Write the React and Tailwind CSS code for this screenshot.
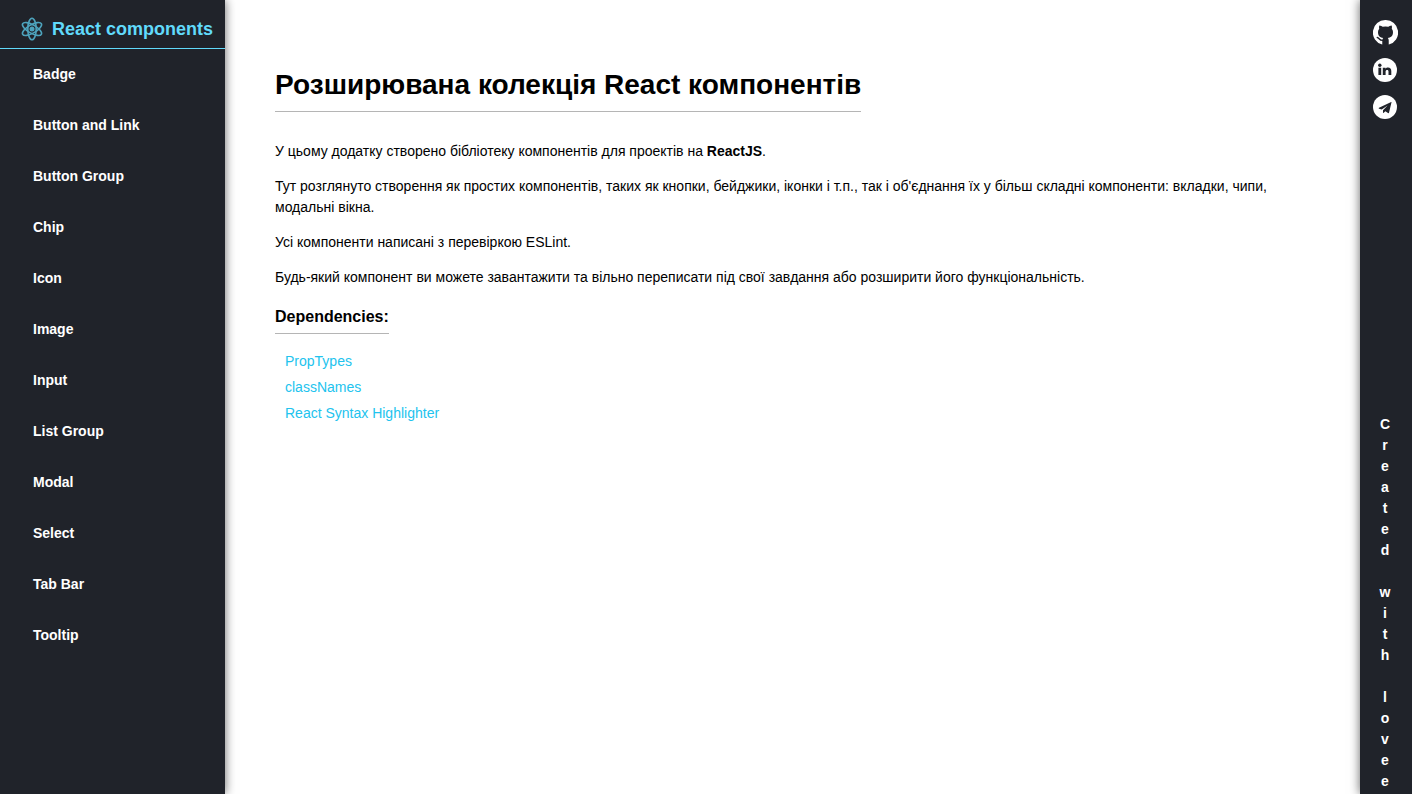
import React from 'react';

const components = [
  'Badge',
  'Button and Link',
  'Button Group',
  'Chip',
  'Icon',
  'Image',
  'Input',
  'List Group',
  'Modal',
  'Select',
  'Tab Bar',
  'Tooltip',
];

const dependencies = ['PropTypes', 'classNames', 'React Syntax Highlighter'];

function ReactLogo() {
  return (
    <svg viewBox="0 0 24 24" className="size-6 shrink-0 text-[#61dafb] opacity-70" fill="none" stroke="currentColor" strokeWidth="1.6" aria-hidden="true">
      <ellipse cx="12" cy="12" rx="4.2" ry="10.8" />
      <ellipse cx="12" cy="12" rx="4.2" ry="10.8" transform="rotate(60 12 12)" />
      <ellipse cx="12" cy="12" rx="4.2" ry="10.8" transform="rotate(120 12 12)" />
      <circle cx="12" cy="12" r="2.5" fill="currentColor" stroke="none" />
    </svg>
  );
}

function GithubIcon() {
  return (
    <svg viewBox="0 0 24 24" className="size-[25px]" aria-hidden="true">
      <path d="M12 0a12 12 0 0 0-3.2 23.6h6.4A12 12 0 0 0 12 0Z" fill="#fff" />
      <path
        d="M6.1 5.2c1.4 0 2.6.8 3.3 1.3a11 11 0 0 1 5.2 0c.7-.5 1.9-1.3 3.3-1.3.5 1.3.3 2.5.1 3.1.8.9 1.2 2 1.2 3.2 0 4-2.3 5.4-5 5.8.6.6.9 1.4.9 2.4V24H8.9v-4.300c0-1 .3-1.800.9-2.400-2.700-.4-5-1.800-5-5.800 0-1.200.4-2.300 1.200-3.200-.2-.6-.4-1.800.1-3.100Z"
        fill="#20232a"
      />
      <path d="M4.100 16.800c2 .3 1.900 3.100 5.200 2.800" fill="none" stroke="#20232a" strokeWidth="1.300" strokeLinecap="round" />
    </svg>
  );
}

function LinkedinIcon() {
  return (
    <svg viewBox="0 0 24 24" className="size-6" aria-hidden="true">
      <circle cx="12" cy="12" r="12" fill="#fff" />
      <g fill="#20232a">
        <circle cx="6.800" cy="7.200" r="1.700" />
        <path d="M5.400 9.800h2.800V17H5.400ZM9.800 9.800h2.700v1c.5-.8 1.400-1.200 2.500-1.200 2.200 0 3.300 1.300 3.300 3.500V17h-2.800v-3.500c0-1-.4-1.600-1.300-1.600-1 0-1.600.7-1.600 1.700V17H9.800Z" />
      </g>
    </svg>
  );
}

function TelegramIcon() {
  return (
    <svg viewBox="0 0 24 24" className="size-6" aria-hidden="true">
      <circle cx="12" cy="12" r="12" fill="#fff" />
      <path
        d="M18.200 7 6 12.700c-.5.300-.4.800.1 1l2.600.8 5.900-4-4.600 4.700v2.300c.1.500.5.500.8.200l1.500-1.500 2.700 1.900c.5.300.9.100 1-.4L18.500 7.300c.1-.3-.1-.4-.3-.3Z"
        fill="#20232a"
      />
    </svg>
  );
}

function Sidebar() {
  return (
    <aside className="z-10 w-[225px] shrink-0 bg-[#20232a] shadow-[0_0_10px_rgba(0,0,0,0.6)]">
      <a href="#home" className="flex h-[49px] items-center gap-2 border-b border-[#61dafb] pt-[10px] pl-5 text-lg font-bold whitespace-nowrap text-[#61dafb]">
        <ReactLogo />
        React components
      </a>
      <nav aria-label="Components">
        <ul>
          {components.map((name) => (
            <li key={name}>
              <a href={`#${name}`} className="block px-[33px] py-[15px] font-bold text-white">
                {name}
              </a>
            </li>
          ))}
        </ul>
      </nav>
    </aside>
  );
}

function SocialBar() {
  return (
    <aside className="z-10 flex w-[52px] shrink-0 flex-col items-center justify-between bg-[#20232a] pt-5 pr-0.5 pb-0.5 text-white shadow-[0_0_10px_rgba(0,0,0,0.6)]">
      <div className="flex flex-col gap-[13px]">
        <a href="#github" aria-label="GitHub">
          <GithubIcon />
        </a>
        <a href="#linkedin" aria-label="LinkedIn">
          <LinkedinIcon />
        </a>
        <a href="#telegram" aria-label="Telegram">
          <TelegramIcon />
        </a>
      </div>
      <p className="flex flex-col items-center font-bold">
        {Array.from('Created with lovee').map((letter, index) => (
          <span key={index} className="h-[21px]">
            {letter}
          </span>
        ))}
      </p>
    </aside>
  );
}

export default function App() {
  return (
    <div className="flex min-h-screen bg-white font-['Liberation_Sans',Arial,sans-serif] text-[14px] leading-[21px] text-black">
      <Sidebar />
      <main className="min-w-0 flex-1 px-[50px] pt-16 pb-8">
        <h1 className="w-fit border-b border-[#b5b5b5] pb-[5px] text-[28px] leading-[42px] font-bold">
          Розширювана колекція React компонентів
        </h1>
        <div className="mt-[29px] flex flex-col gap-[14px]">
          <p>
            У цьому додатку створено бібліотеку компонентів для проектів на <strong>ReactJS</strong>.
          </p>
          <p>
            Тут розглянуто створення як простих компонентів, таких як кнопки, бейджики, іконки і т.п., так і об'єднання їх у більш складні компоненти: вкладки, чипи, модальні вікна.
          </p>
          <p>Усі компоненти написані з перевіркою ESLint.</p>
          <p>
            Будь-який компонент ви можете завантажити та вільно переписати під свої завдання або розширити його функціональність.
          </p>
        </div>
        <h2 className="mt-[17px] w-fit border-b border-[#b5b5b5] pb-1 text-base leading-6 font-bold">
          Dependencies:
        </h2>
        <ul className="mt-[17px] flex flex-col gap-[5px] pl-[10px]">
          {dependencies.map((name) => (
            <li key={name}>
              <a href={`#${name}`} className="text-[#22c3ee]">
                {name}
              </a>
            </li>
          ))}
        </ul>
      </main>
      <SocialBar />
    </div>
  );
}
